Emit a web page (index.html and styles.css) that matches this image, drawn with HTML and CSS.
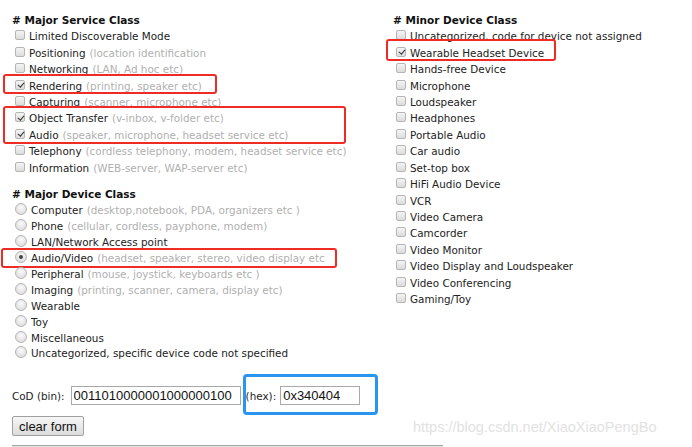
FILE: index.html
```html
<!DOCTYPE html>
<html lang="en">
<head>
    <meta charset="UTF-8">
    <title>Bluetooth Class of Device Generator</title>
    <link rel="stylesheet" href="styles.css">
</head>
<body>

    <form class="page">
        <div class="columns">
            <!-- Left column: service + major device class -->
            <div class="col col-left">
                <div class="group">
                    <h3># Major Service Class</h3>
                    <label class="row"><input type="checkbox"> Limited Discoverable Mode</label>
                    <label class="row"><input type="checkbox"> Positioning <span class="hint">(location identification</span></label>
                    <label class="row"><input type="checkbox"> Networking <span class="hint">(LAN, Ad hoc etc)</span></label>
                    <div class="mark mark-render">
                        <label class="row"><input type="checkbox" checked> Rendering <span class="hint">(printing, speaker etc)</span></label>
                    </div>
                    <label class="row"><input type="checkbox"> Capturing <span class="hint">(scanner, microphone etc)</span></label>
                    <div class="mark mark-transfer">
                        <label class="row"><input type="checkbox" checked> Object Transfer <span class="hint">(v-inbox, v-folder etc)</span></label>
                        <label class="row"><input type="checkbox" checked> Audio <span class="hint">(speaker, microphone, headset service etc)</span></label>
                    </div>
                    <label class="row"><input type="checkbox"> Telephony <span class="hint">(cordless telephony, modem, headset service etc)</span></label>
                    <label class="row"><input type="checkbox"> Information <span class="hint">(WEB-server, WAP-server etc)</span></label>
                </div>

                <div class="group group-major">
                    <h3># Major Device Class</h3>
                    <label class="row radio-row"><input type="radio" name="major"> Computer <span class="hint">(desktop,notebook, PDA, organizers etc )</span></label>
                    <label class="row radio-row"><input type="radio" name="major"> Phone <span class="hint">(cellular, cordless, payphone, modem)</span></label>
                    <label class="row radio-row"><input type="radio" name="major"> LAN/Network Access point</label>
                    <div class="mark mark-av">
                        <label class="row radio-row"><input type="radio" name="major" checked> Audio/Video <span class="hint">(headset, speaker, stereo, video display etc</span></label>
                    </div>
                    <label class="row radio-row"><input type="radio" name="major"> Peripheral <span class="hint">(mouse, joystick, keyboards etc )</span></label>
                    <label class="row radio-row"><input type="radio" name="major"> Imaging <span class="hint">(printing, scanner, camera, display etc)</span></label>
                    <label class="row radio-row"><input type="radio" name="major"> Wearable</label>
                    <label class="row radio-row"><input type="radio" name="major"> Toy</label>
                    <label class="row radio-row"><input type="radio" name="major"> Miscellaneous</label>
                    <label class="row radio-row"><input type="radio" name="major"> Uncategorized, specific device code not specified</label>
                </div>
            </div>

            <!-- Right column: minor device class -->
            <div class="col col-right">
                <div class="group">
                    <h3># Minor Device Class</h3>
                    <label class="row"><input type="checkbox"> Uncategorized, code for device not assigned</label>
                    <div class="mark mark-wear">
                        <label class="row"><input type="checkbox" checked> Wearable Headset Device</label>
                    </div>
                    <label class="row"><input type="checkbox"> Hands-free Device</label>
                    <label class="row"><input type="checkbox"> Microphone</label>
                    <label class="row"><input type="checkbox"> Loudspeaker</label>
                    <label class="row"><input type="checkbox"> Headphones</label>
                    <label class="row"><input type="checkbox"> Portable Audio</label>
                    <label class="row"><input type="checkbox"> Car audio</label>
                    <label class="row"><input type="checkbox"> Set-top box</label>
                    <label class="row"><input type="checkbox"> HiFi Audio Device</label>
                    <label class="row"><input type="checkbox"> VCR</label>
                    <label class="row"><input type="checkbox"> Video Camera</label>
                    <label class="row"><input type="checkbox"> Camcorder</label>
                    <label class="row"><input type="checkbox"> Video Monitor</label>
                    <label class="row"><input type="checkbox"> Video Display and Loudspeaker</label>
                    <label class="row"><input type="checkbox"> Video Conferencing</label>
                    <label class="row"><input type="checkbox"> Gaming/Toy</label>
                </div>
            </div>
        </div>

        <div class="cod">
            <label for="codBin">CoD (bin):</label>
            <input type="text" id="codBin" class="bin" value="0011010000001000000100">
            <span class="hex-wrap">
                <label for="codHex">(hex):</label>
                <input type="text" id="codHex" class="hex" value="0x340404">
            </span>
        </div>

        <button type="reset" class="clear-btn">clear form</button>
        <div class="rule"></div>
    </form>

    <div class="watermark">https://blog.csdn.net/XiaoXiaoPengBo</div>

</body>
</html>
```

FILE: styles.css
```css
body {
    margin: 0;
    background: #fff;
    font-family: "DejaVu Sans", Verdana, sans-serif;
    font-size: 10.4px;
    color: #222;
    overflow: hidden;
}

.page {
    padding: 12px 0 0 12px;
}

.columns {
    display: flex;
}

.col-left {
    width: 381px;
}

h3 {
    margin: 0;
    height: 16px;
    line-height: 16px;
    font-size: 10.5px;
    font-weight: bold;
    color: #111;
}

.group-major {
    margin-top: 10.5px;
}

.row {
    display: flex;
    align-items: center;
    height: 16.45px;
    white-space: nowrap;
}

.radio-row {
    height: 15.9px;
}

.hint {
    color: #b0b0b0;
    margin-left: 4px;
}

/* checkboxes */
input[type="checkbox"] {
    appearance: none;
    -webkit-appearance: none;
    position: relative;
    width: 10px;
    height: 10px;
    margin: 0 4px 0 3px;
    border: 1px solid #b5b5b5;
    border-radius: 2px;
    background: linear-gradient(#f4f4f4, #dcdcdc);
    box-sizing: border-box;
    flex-shrink: 0;
    top: -1px;
}

input[type="checkbox"]:checked::after {
    content: "";
    position: absolute;
    left: 2.5px;
    top: 0.5px;
    width: 2.5px;
    height: 5px;
    border: solid #333;
    border-width: 0 1.6px 1.6px 0;
    transform: rotate(40deg);
}

/* radios */
input[type="radio"] {
    appearance: none;
    -webkit-appearance: none;
    position: relative;
    width: 12px;
    height: 12px;
    margin: 0 4px 0 3px;
    border: 1px solid #b5b5b5;
    border-radius: 50%;
    background: radial-gradient(circle at 50% 35%, #fafafa, #d6d6d6);
    box-sizing: border-box;
    flex-shrink: 0;
    top: -1px;
}

input[type="radio"]:checked::after {
    content: "";
    position: absolute;
    left: 3px;
    top: 3px;
    width: 4px;
    height: 4px;
    border-radius: 50%;
    background: #444;
}

/* red annotation frames */
.mark {
    position: relative;
}

.mark::before {
    content: "";
    position: absolute;
    border: 2px solid #ee2b24;
    border-radius: 3px;
    pointer-events: none;
}

.mark-render::before {
    left: -9px;
    top: -3px;
    width: 210px;
    height: 16px;
}

.mark-transfer::before {
    left: -9px;
    top: -4px;
    width: 339px;
    height: 34px;
}

.mark-av::before {
    left: -11px;
    top: -2px;
    width: 332px;
    height: 16px;
}

.mark-wear::before {
    left: -7px;
    top: -5px;
    width: 166px;
    height: 18px;
}

/* CoD output */
.cod {
    display: flex;
    align-items: center;
    margin-top: 25px;
    height: 19px;
}

.cod label {
    margin-right: 6px;
}

.cod input {
    font-family: "Liberation Sans", Arial, sans-serif;
    font-size: 13px;
    color: #111;
    height: 19px;
    margin: 0;
    padding: 0 2px;
    border: 1px solid #a9a9a9;
    box-sizing: border-box;
}

.bin {
    width: 170px;
}

.hex-wrap {
    position: relative;
    display: flex;
    align-items: center;
    height: 19px;
    margin-left: 5px;
}

.hex-wrap label {
    margin-right: 4px;
}

.hex-wrap::before {
    content: "";
    position: absolute;
    left: -3px;
    top: -12px;
    width: 129px;
    height: 35px;
    border: 3px solid #2a95f0;
    border-radius: 4px;
}

.hex {
    width: 80px;
}

.clear-btn {
    display: block;
    margin-top: 11px;
    height: 20px;
    padding: 0 6px;
    font-family: "Liberation Sans", Arial, sans-serif;
    font-size: 13px;
    color: #111;
    border: 1px solid #a0a0a0;
    border-radius: 2px;
    background: linear-gradient(#f6f6f6, #dcdcdc);
}

.rule {
    width: 431px;
    height: 2px;
    margin-top: 9px;
    border-top: 1px solid #a8a8a8;
    border-bottom: 1px solid #e2e2e2;
    box-sizing: border-box;
}

.watermark {
    position: absolute;
    left: 413px;
    top: 419px;
    font-family: "Liberation Sans", Arial, sans-serif;
    font-size: 14.5px;
    color: #e2e2e2;
}
```
